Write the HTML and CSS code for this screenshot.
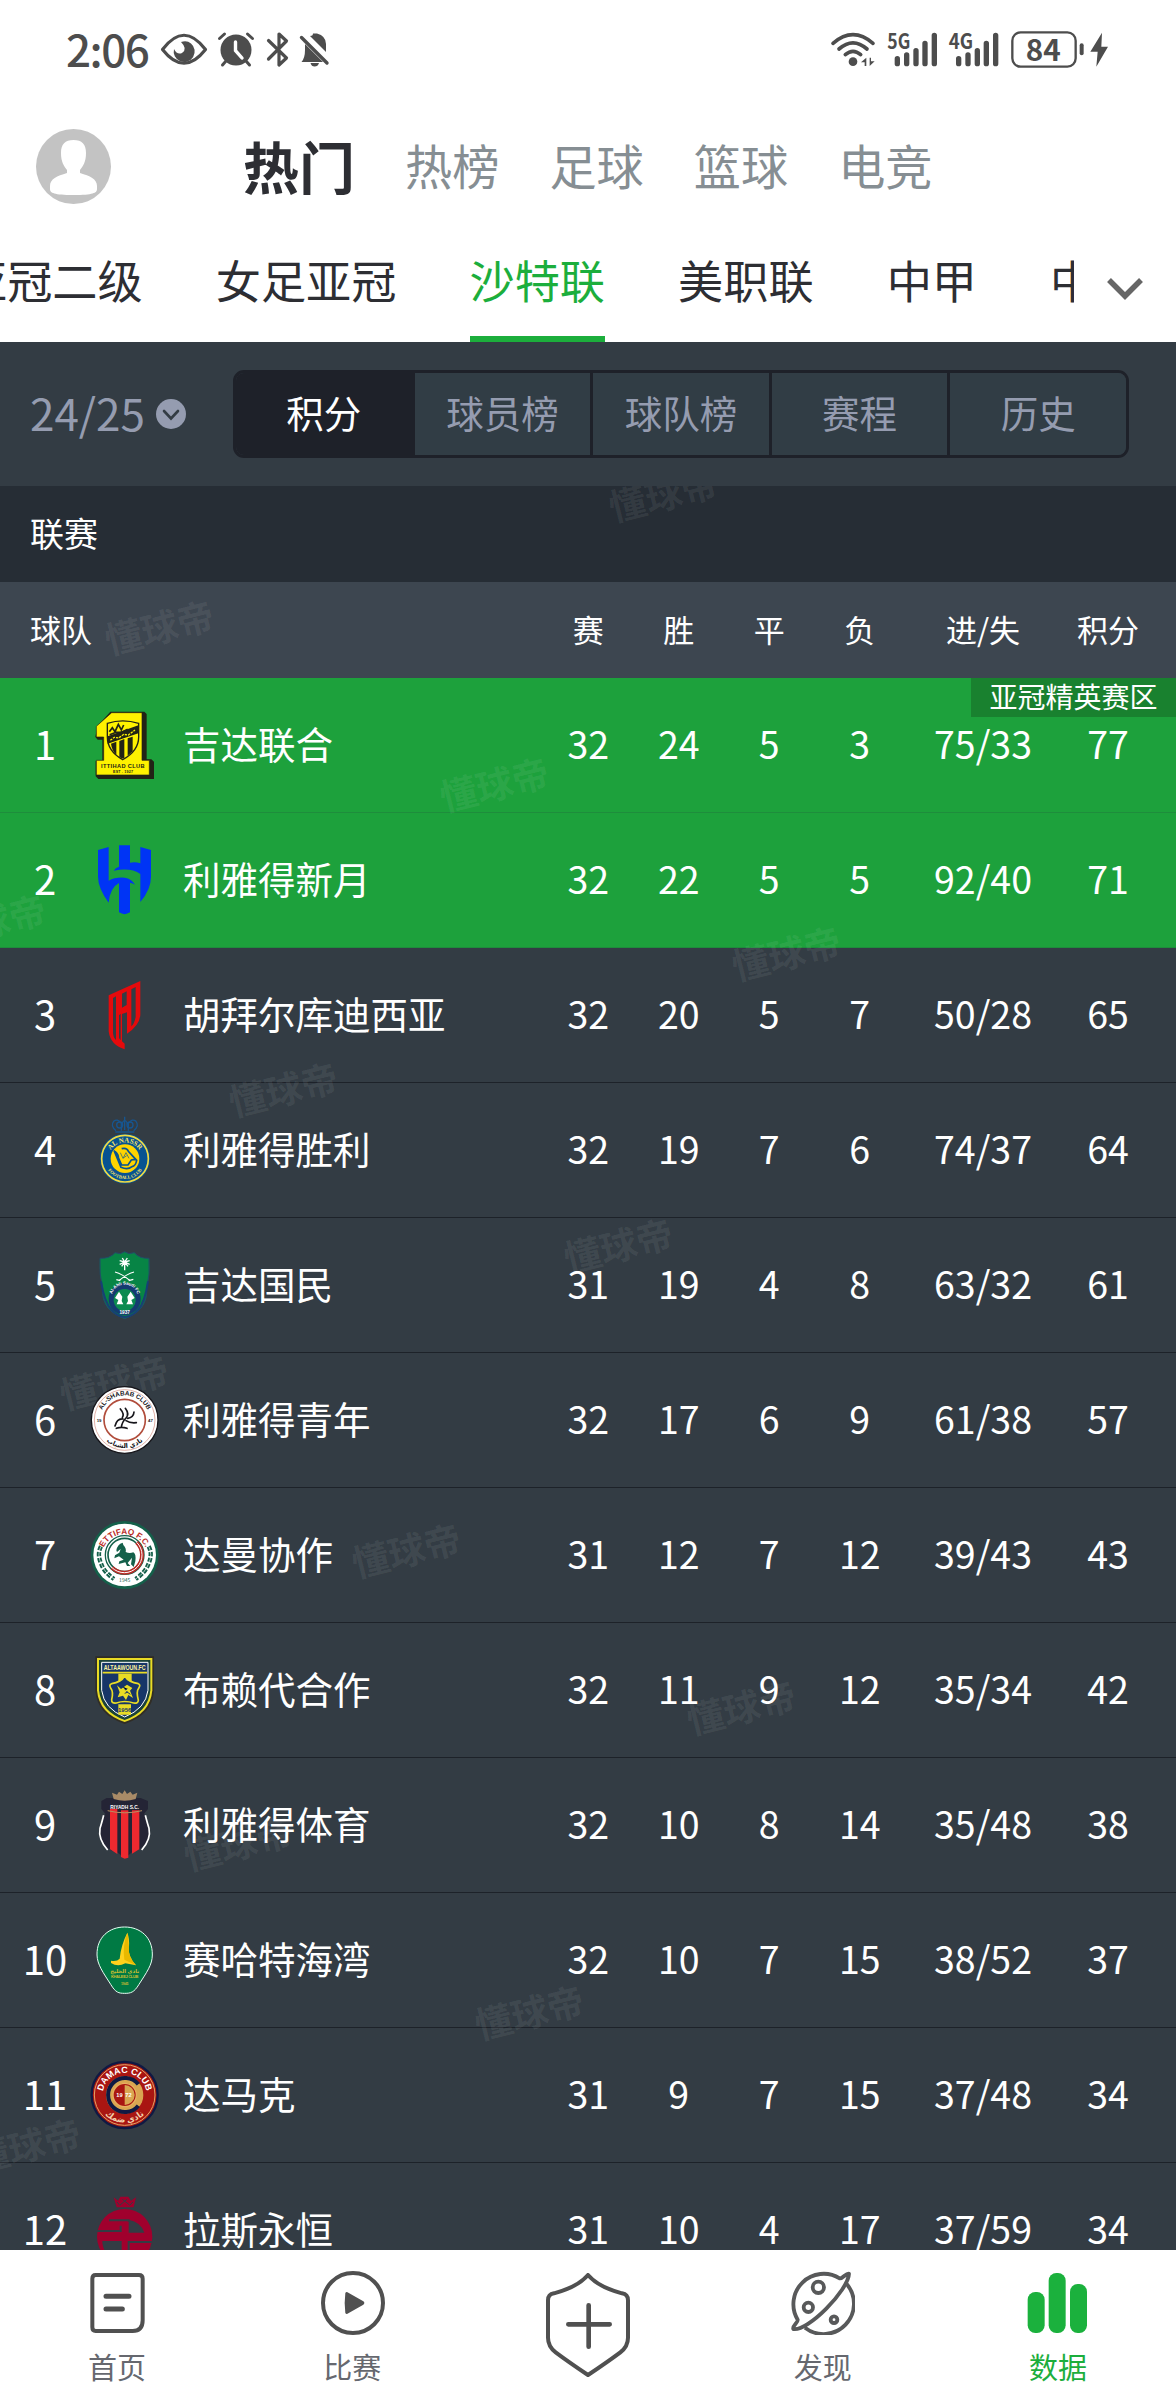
FILE: index.html
```html
<!DOCTYPE html>
<html lang="zh-CN">
<head>
  <meta charset="UTF-8">
  <title>沙特联 积分榜</title>
  <link rel="stylesheet" href="styles.css">
</head>
<body>

  <div class="status-bar">
    <div class="status-left">
      <span class="clock">2:06</span>
      <svg width="52" height="48" viewBox="158 26 52 48"><path d="M162.500 49.500Q184 21 205.500 49.500Q184 77 162.500 49.500Z" fill="none" stroke="#4d4d4d" stroke-width="3.200" stroke-linejoin="round"/><path d="M181 42Q187 40 191 43.500A10.500 10.500 0 1 1 174 49Q177 55 182 53Q188 49 181 42Z" fill="#4d4d4d"/></svg>
      <svg width="46" height="48" viewBox="214 26 46 48"><circle cx="237" cy="50" r="15.500" fill="#4d4d4d"/><path d="M220.500 38.500L225.500 34M253.500 38.500L248.500 34M227 61L223.500 65M247 61L250.500 65" stroke="#4d4d4d" stroke-width="3" stroke-linecap="round"/><path d="M236.500 42V50.500L243 58" fill="none" stroke="#fff" stroke-width="3.400" stroke-linecap="round"/></svg>
      <svg width="32" height="48" viewBox="262 26 32 48"><path d="M268.500 40.500L286.500 58L279 65V34L286.500 41L268.500 59" fill="none" stroke="#4d4d4d" stroke-width="3.200" stroke-linecap="round" stroke-linejoin="round"/></svg>
      <svg width="40" height="48" viewBox="296 26 40 48"><path d="M304 41L325 62H303.500Q307 58 307 50V44ZM312 36Q315 36 315 33.500H319Q328 36 328 44V52ZM312.500 63H321Q320 66.500 316.500 66.500Q313.500 66.500 312.500 63Z" fill="#4d4d4d"/><path d="M303.500 37.500L329 63" stroke="#4d4d4d" stroke-width="3.400" stroke-linecap="round"/></svg>
    </div>
    <div class="status-right">
      <!-- wifi -->
      <svg width="51.670" height="60" viewBox="30 0 155 180"><path d="M39 70Q99 18 159 70M57 87Q99 50 141 87M76 104Q99 84 122 104" fill="none" stroke="#4d4d4d" stroke-width="11" stroke-linecap="round"/><circle cx="99" cy="125" r="13" fill="#4d4d4d"/><path d="M123 127L139 113V138H134V127ZM164 124L149 138V113H153V124Z" fill="#4d4d4d"/></svg>
      <!-- signal 5G -->
      <svg width="61.670" height="60" viewBox="185 0 185 180"><text class="net" x="201" y="87" textLength="69" lengthAdjust="spacingAndGlyphs">5G</text><path d="M231 116V131M259 105V131M287 92V131M314 70V131M342 46V131" stroke="#4d4d4d" stroke-width="16" stroke-linecap="round"/></svg>
      <!-- signal 4G -->
      <svg width="61.670" height="60" viewBox="370 0 185 180"><text class="net" x="387" y="87" textLength="73" lengthAdjust="spacingAndGlyphs">4G</text><path d="M417 116V131M445 105V131M473 92V131M500 70V131M528 46V131" stroke="#4d4d4d" stroke-width="16" stroke-linecap="round"/></svg>
      <!-- battery -->
      <svg width="83.330" height="60" viewBox="555 0 250 180"><rect x="577" y="37" width="190" height="103" rx="25" fill="none" stroke="#4d4d4d" stroke-width="7"/><path d="M785 76V100" stroke="#4d4d4d" stroke-width="12" stroke-linecap="round"/><text class="level" x="617" y="122" textLength="105" lengthAdjust="spacingAndGlyphs">84</text></svg>
      <svg width="21.670" height="60" viewBox="805 0 65 180"><path d="M847 38L812 95H834L830 140L865 80H845Z" fill="#4d4d4d"/></svg>
    </div>
  </div>

  <div class="header">
    <svg class="avatar" width="75" height="75" viewBox="0 0 75 75"><circle cx="37.500" cy="37.500" r="37.500" fill="#c3c3c3"/><path d="M37.500 11C46 11 50 15 50 24C50 33 47 37 44 41V44C54 47 61 50 61 57V60C61 64 57 66 37.500 66S14 64 14 60V57C14 50 21 47 31 44V41C28 37 25 33 25 24C25 15 29 11 37.500 11Z" fill="#fff"/></svg>
    <div class="channels">
      <span class="channel current">热门</span>
      <span class="channel">热榜</span>
      <span class="channel">足球</span>
      <span class="channel">篮球</span>
      <span class="channel">电竞</span>
    </div>
  </div>

  <div class="league-bar">
    <div class="leagues">
      <span class="league">亚冠二级</span>
      <span class="league">女足亚冠</span>
      <span class="league active">沙特联</span>
      <span class="league">美职联</span>
      <span class="league">中甲</span>
      <span class="league">中乙</span>
    </div>
    <svg class="more" width="36" height="24" viewBox="0 0 36 24"><path d="M2 3L18 19L34 3" fill="none" stroke="#666" stroke-width="5.500"/></svg>
  </div>

  <div class="filter">
    <div class="season"><span>24/25</span>
      <svg width="30" height="30" viewBox="0 0 30 30"><circle cx="15" cy="15" r="15" fill="#959cb0"/><path d="M8 12L15 19.500L22 12" fill="none" stroke="#333c44" stroke-width="2.600" stroke-linecap="round"/></svg>
    </div>
    <div class="segments">
      <span class="segment on">积分</span>
      <span class="segment">球员榜</span>
      <span class="segment">球队榜</span>
      <span class="segment">赛程</span>
      <span class="segment">历史</span>
    </div>
  </div>

  <div class="standings">
    <div class="section"><span>联赛</span></div>
    <div class="row head">
      <span class="label">球队</span>
      <span>赛</span><span>胜</span><span>平</span><span>负</span><span>进/失</span><span>积分</span>
    </div>

    <div class="row zone">
      <span class="zone-tag">亚冠精英赛区</span>
      <span class="rank">1</span>
      <svg class="logo" viewBox="0 0 204 204">
        <path d="M20 44L58 2H160L167 9V145H181L189 152V204H22L14 196V150H34V86H20L13 78Z" fill="#222316"/>
        <path d="M16 46L62 5H153V148H175V192H16V148H38V78H16Z" fill="#fff200" stroke="#222316" stroke-width="2"/>
        <path d="M49 37Q95 22 143 37V78Q143 120 95 146Q49 120 49 78Z" fill="#fff200" stroke="#222316" stroke-width="4"/>
        <path d="M50 76L142 43V67L50 98ZM60 98L76 92V131Q63 120 60 98ZM85 90L100 84V142H92L85 138ZM110 82L125 77V121L110 134Z" fill="#222316"/>
        <path d="M55 62L64 50L72 62L82 40L91 57L98 42M56 71L75 64L93 64L110 55" fill="none" stroke="#222316" stroke-width="5"/>
        <path d="M58 88L70 79L83 81L98 70L112 72L132 57" fill="none" stroke="#fff200" stroke-width="4" stroke-dasharray="7 3"/>
        <text x="30" y="172" class="crest-bold" font-size="17" fill="#222316" textLength="131">ITTIHAD CLUB</text>
        <text x="66" y="185" class="crest-bold" font-size="11" fill="#222316" textLength="60">EST . 1927</text>
      </svg>
      <span class="team">吉达联合</span>
      <span>32</span><span>24</span><span>5</span><span>3</span><span>75/33</span><span>77</span>
    </div>

    <div class="row zone">
      <span class="rank">2</span>
      <svg class="logo" viewBox="0 0 204 204">
        <path d="M21 12L53 3V104Q72 93 101 95Q122 98 132 116Q123 110 117 111V199Q101 210 84 199V111Q57 125 53 170Q21 126 21 92ZM84 -2H117V50Q132 46 148 52V3L180 12V92Q180 130 148 168V84Q120 64 68 74Q73 65 84 62Z" fill="#0034f5"/>
      </svg>
      <span class="team">利雅得新月</span>
      <span>32</span><span>22</span><span>5</span><span>5</span><span>92/40</span><span>71</span>
    </div>

    <div class="row">
      <span class="rank">3</span>
      <svg class="logo" viewBox="0 0 204 204">
        <path d="M53 43L148 0V101Q146 133 108 158V94L93 99V181L101 188V205Q58 192 53 151Z" fill="#e50a0c"/>
        <path d="M66 51L75 46V177Q65 168 66 150ZM93 38L107 31V72L93 80ZM121 25L134 18V108Q130 129 121 136ZM84 171V103L89 98V178Z" fill="#333c44"/>
      </svg>
      <span class="team">胡拜尔库迪西亚</span>
      <span>32</span><span>20</span><span>5</span><span>7</span><span>50/28</span><span>65</span>
    </div>

    <div class="row">
      <span class="rank">4</span>
      <svg class="logo" viewBox="0 0 204 204">
        <g fill="none" stroke="#17558f" stroke-width="4"><path d="M73 48H130M75 44Q57 29 68 16Q79 6 91 22V44M128 44Q146 29 135 16Q124 6 112 22V44M91 30Q101 -4 112 30M101 2V42"/><circle cx="86" cy="27" r="9"/><circle cx="117" cy="27" r="9"/></g>
        <circle cx="102" cy="128" r="75" fill="#075391"/>
        <circle cx="102" cy="128" r="70" fill="none" stroke="#f0db45" stroke-width="5"/>
        <circle cx="102" cy="128" r="43" fill="#ffd400"/>
        <path d="M69 103L90 154Q110 163 123 152Q134 150 137 133L112 106Q108 94 92 98M72 106Q83 116 82 125L92 147H111L121 132L134 130" fill="none" stroke="#075391" stroke-width="5"/>
        <path d="M88 110L96 127L105 110L114 127M97 126L107 119" fill="none" stroke="#075391" stroke-width="2"/>
        <path id="nassrTop" d="M51 130A51 51 0 0 1 153 130" fill="none"/><path id="nassrBottom" d="M41 128A61 61 0 0 0 163 128" fill="none"/>
        <text class="crest-serif" font-size="21" fill="#f8e46a"><textPath href="#nassrTop" startOffset="50%" text-anchor="middle">AL NASSR</textPath></text>
        <text class="crest-serif" font-size="14" fill="#f8e46a"><textPath href="#nassrBottom" startOffset="50%" text-anchor="middle">FOOTBALL CLUB</textPath></text>
      </svg>
      <span class="team">利雅得胜利</span>
      <span>32</span><span>19</span><span>7</span><span>6</span><span>74/37</span><span>64</span>
    </div>

    <div class="row">
      <span class="rank">5</span>
      <svg class="logo" viewBox="0 0 204 204">
        <path d="M27 22Q57 23 72 5L88 8L101 2L114 8L130 5Q145 23 174 22Q178 70 167 112Q171 178 101 203Q30 178 35 112Q24 70 27 22Z" fill="#078445" stroke="#214d69" stroke-width="3"/>
        <path d="M30 91Q40 153 61 176Q78 196 101 198Q125 196 142 176Q162 153 171 91" fill="none" stroke="#173f75" stroke-width="6"/>
        <circle cx="101" cy="144" r="48" fill="#153b70"/><circle cx="101" cy="147" r="33" fill="#0b8b50"/>
        <path d="M101 30V58M101 33L86 29M101 33L116 29M101 33L86 40M101 33L116 40M101 33L94 21M101 33L109 21M101 33L92 46M101 33L111 46" stroke="#fff" stroke-width="4"/>
        <path d="M72 63Q94 69 117 89M129 63Q107 69 84 89M76 86L88 89M113 89L127 85" fill="none" stroke="#fff" stroke-width="3.500"/>
        <path d="M84 122L94 137L92 150L97 160H77L82 147L72 141ZM119 122L109 137L111 150L106 160H126L121 147L131 141Z" fill="#fff"/>
        <path id="ahliTop" d="M62 140A39 39 0 0 1 141 140" fill="none"/>
        <text class="crest-bold" font-size="13" fill="#fff"><textPath href="#ahliTop" startOffset="50%" text-anchor="middle">Al-Ahli Saudi FC</textPath></text>
        <text x="101" y="190" class="crest-bold" font-size="14" fill="#fff" text-anchor="middle">1937</text>
      </svg>
      <span class="team">吉达国民</span>
      <span>31</span><span>19</span><span>4</span><span>8</span><span>63/32</span><span>61</span>
    </div>

    <div class="row">
      <span class="rank">6</span>
      <svg class="logo" viewBox="0 0 204 204">
        <circle cx="101" cy="102" r="100" fill="#fff" stroke="#16151a" stroke-width="4"/>
        <circle cx="101" cy="102" r="91" fill="none" stroke="#d08a7c" stroke-width="2"/>
        <circle cx="101" cy="102" r="62" fill="none" stroke="#b14d3c" stroke-width="5"/>
        <g fill="none" stroke="#17161b" stroke-width="5" stroke-linecap="round"><path d="M88 69Q101 84 94 95M103 67Q116 84 105 96Q93 108 91 124M129 78Q128 94 110 97M72 120Q78 97 96 99M76 127Q92 121 108 127M105 104Q117 112 136 110"/></g>
        <path id="shababTop" d="M27 102A74 74 0 0 1 175 102" fill="none"/><path id="shababBottom" d="M17 102A84 84 0 0 0 185 102" fill="none"/>
        <text class="crest-bold" font-size="19" fill="#17161b"><textPath href="#shababTop" startOffset="50%" text-anchor="middle">AL-SHABAB CLUB</textPath></text>
        <text class="crest-bold" font-size="20" fill="#17161b"><textPath href="#shababBottom" startOffset="50%" text-anchor="middle">نادي الشباب</textPath></text>
        <text x="17" y="107" class="crest-bold" font-size="13" fill="#17161b">19</text><text x="171" y="107" class="crest-bold" font-size="13" fill="#17161b">47</text>
      </svg>
      <span class="team">利雅得青年</span>
      <span>32</span><span>17</span><span>6</span><span>9</span><span>61/38</span><span>57</span>
    </div>

    <div class="row">
      <span class="rank">7</span>
      <svg class="logo" viewBox="0 0 204 204">
        <circle cx="101" cy="102" r="102" fill="#14604a"/><circle cx="101" cy="102" r="94" fill="#fff"/>
        <circle cx="101" cy="102" r="58" fill="none" stroke="#14604a" stroke-width="4"/>
        <circle cx="101" cy="102" r="50" fill="none" stroke="#14604a" stroke-width="5"/>
        <path d="M137 64A53 53 0 0 1 63 140" fill="none" stroke="#b92c27" stroke-width="12"/>
        <path d="M137 64A53 53 0 0 1 63 140" fill="none" stroke="#fff" stroke-width="3"/>
        <path d="M76 88Q79 70 95 65L97 72Q107 83 104 93Q115 98 127 94Q136 99 133 121L128 138L120 130L123 110L110 126L118 135H108L103 124L83 129L85 121L98 116L84 106L70 112L72 103L85 95L89 84L78 93Z" fill="#14604a"/>
        <path d="M30 76Q17 99 31 130Q40 154 69 174M173 76Q186 99 172 130Q163 154 134 174" fill="none" stroke="#14604a" stroke-width="13" stroke-dasharray="13 5"/>
        <path d="M30 76Q17 99 31 130Q40 154 69 174M173 76Q186 99 172 130Q163 154 134 174" fill="none" stroke="#fff" stroke-width="2"/>
        <path id="ettifaqTop" d="M34 92A69 69 0 0 1 168 92" fill="none"/>
        <text class="crest-bold" font-size="25" fill="#b92c27"><textPath href="#ettifaqTop" startOffset="50%" text-anchor="middle">ETTIFAQ F.C.</textPath></text>
        <text x="101" y="184" font-size="15" fill="#14604a" text-anchor="middle">1945</text>
      </svg>
      <span class="team">达曼协作</span>
      <span>31</span><span>12</span><span>7</span><span>12</span><span>39/43</span><span>43</span>
    </div>

    <div class="row">
      <span class="rank">8</span>
      <svg class="logo" viewBox="0 0 204 204">
        <path d="M13 1H189V103Q185 177 101 204Q18 177 13 103Z" fill="#312d25"/>
        <path d="M18 6H184V103Q178 173 101 198Q24 173 18 103Z" fill="#e9dc25"/>
        <path d="M24 12H178V103Q172 168 101 192Q31 168 24 103Z" fill="#1a4139"/>
        <path d="M32 19H171V103Q164 158 101 183Q39 158 32 103Z" fill="#173668" stroke="#fff" stroke-width="3"/>
        <path d="M35 50H168" stroke="#e9dc25" stroke-width="5"/>
        <path d="M82 53H122V84H82ZM82 145H120V176H82Z" fill="#e9dc25"/>
        <path d="M101 60Q113 79 142 83Q150 86 143 97Q135 107 142 133Q141 143 128 141Q101 132 76 141Q61 143 62 131Q68 108 59 96Q53 86 62 83Q90 79 101 60Z" fill="#173668" stroke="#e9dc25" stroke-width="5" stroke-linejoin="round"/>
        <path d="M78 88L90 99L108 86L124 96L117 104L126 126L112 117L105 132L96 119L80 124L86 109Z" fill="#e9dc25"/>
        <path d="M96 92L104 102L109 98M101 112L111 108M106 106L118 115" stroke="#173668" stroke-width="3"/>
        <text x="38" y="43" class="crest-bold" font-size="21" fill="#fff4a0" textLength="126" lengthAdjust="spacingAndGlyphs">ALTAAWOUN.FC</text>
        <text x="101" y="168" class="crest-bold" font-size="18" fill="#173668" text-anchor="middle">1956</text>
      </svg>
      <span class="team">布赖代合作</span>
      <span>32</span><span>11</span><span>9</span><span>12</span><span>35/34</span><span>42</span>
    </div>

    <div class="row">
      <span class="rank">9</span>
      <svg class="logo" viewBox="0 0 204 204">
        <path d="M47 21L149 21L171 30V54L159 68Q184 118 167 151Q150 180 123 184L101 202L79 184Q49 180 34 151Q19 118 43 68L31 54V30Z" fill="#242435"/>
        <path d="M57 53H79V189L57 175ZM90 58H112V200L101 203L90 198ZM123 58H145V175L123 188Z" fill="#ee292f"/>
        <path d="M38 73Q31 100 27 112Q21 144 50 177M163 73Q170 100 174 112Q181 144 152 177" fill="none" stroke="#fff" stroke-width="5"/>
        <path d="M50 59Q101 72 153 59" fill="none" stroke="#b59162" stroke-width="3"/>
        <path d="M68 24L63 5L78 11L84 2L94 9L101 -2L108 9L118 2L125 11L139 5L134 24Q101 34 68 24Z" fill="#a98b67"/>
        <text x="101" y="54" class="crest-bold" font-size="18" fill="#fff" text-anchor="middle" textLength="86" lengthAdjust="spacingAndGlyphs">RIYADH S.C.</text>
      </svg>
      <span class="team">利雅得体育</span>
      <span>32</span><span>10</span><span>8</span><span>14</span><span>35/48</span><span>38</span>
    </div>

    <div class="row">
      <span class="rank">10</span>
      <svg class="logo" viewBox="0 0 204 204">
        <path d="M101 3C147 3 185 33 184 87C184 116 167 139 144 175C129 200 119 202 101 202S74 200 59 175C36 139 19 116 18 87C17 33 55 3 101 3Z" fill="#007a44" stroke="#e6fff4" stroke-width="3"/>
        <path d="M109 20Q90 57 86 98Q78 107 60 104V111Q80 124 103 112L135 118Q110 91 114 64Q116 38 109 20Z" fill="#ffd11c"/><path d="M109 20Q94 59 100 101L135 118Q110 91 114 64Z" fill="#e8b900"/>
        <g class="crest-bold" fill="#c9bd32" text-anchor="middle"><text x="101" y="142" font-size="16">نادي الخليج</text><text x="101" y="157" font-size="12" textLength="82">KHALEEJ CLUB</text><text x="101" y="177" font-size="10">1945</text></g>
      </svg>
      <span class="team">赛哈特海湾</span>
      <span>32</span><span>10</span><span>7</span><span>15</span><span>38/52</span><span>37</span>
    </div>

    <div class="row">
      <span class="rank">11</span>
      <svg class="logo" viewBox="0 0 204 204">
        <circle cx="101" cy="102" r="99" fill="#a91612" stroke="#101943" stroke-width="7"/>
        <circle cx="101" cy="102" r="91" fill="none" stroke="#e2a565" stroke-width="3"/>
        <circle cx="101" cy="102" r="56" fill="#d9a651"/>
        <path d="M142 70A51 51 0 1 0 142 134" fill="none" stroke="#101943" stroke-width="12"/>
        <circle cx="101" cy="102" r="35" fill="#a91612" stroke="#e9ae60" stroke-width="4"/>
        <path d="M101 72A30 30 0 0 1 101 132Z" fill="#d9a651"/>
        <text x="76" y="109" class="crest-bold" font-size="17" fill="#fff">19</text><text x="103" y="109" class="crest-bold" font-size="17" fill="#fff">72</text>
        <path id="damacTop" d="M35 102A66 66 0 0 1 167 102" fill="none"/><path id="damacBottom" d="M18 102A83 83 0 0 0 184 102" fill="none"/>
        <text class="crest-bold" font-size="27" fill="#fff"><textPath href="#damacTop" startOffset="50%" text-anchor="middle" textLength="184" lengthAdjust="spacingAndGlyphs">DAMAC CLUB</textPath></text>
        <text class="crest-bold" font-size="26" fill="#f4cfaa"><textPath href="#damacBottom" startOffset="50%" text-anchor="middle">نادي ضمك</textPath></text>
      </svg>
      <span class="team">达马克</span>
      <span>31</span><span>9</span><span>7</span><span>15</span><span>37/48</span><span>34</span>
    </div>

    <div class="row">
      <span class="rank">12</span>
      <svg class="logo" viewBox="0 0 204 204">
        <path d="M68 4L81 14L88 2H112L120 14L135 4L128 34H77Z" fill="#a0002d"/><path d="M87 27L108 10M94 10L116 27M78 18L86 28M126 18L116 28" stroke="#333c44" stroke-width="3"/>
        <circle cx="101" cy="122" r="83" fill="#a0002d"/>
        <path d="M113 71Q150 78 160 110H113Z" fill="#333c44"/>
        <path d="M54 73H113V77M18 105H89V89M34 138H89V190M184 138H113V190" fill="none" stroke="#333c44" stroke-width="6"/>
        <path d="M34 141H89V190H60Q38 169 34 141Z" fill="#333c44"/>
      </svg>
      <span class="team">拉斯永恒</span>
      <span>31</span><span>10</span><span>4</span><span>17</span><span>37/59</span><span>34</span>
    </div>

    <div class="watermarks">
      <i style="left:663px;top:10px">懂球帝</i>
      <i style="left:159px;top:143px">懂球帝</i>
      <i style="left:494px;top:300px">懂球帝</i>
      <i style="left:-9px;top:437px">懂球帝</i>
      <i style="left:786px;top:469px">懂球帝</i>
      <i style="left:283px;top:605px">懂球帝</i>
      <i style="left:618px;top:761px">懂球帝</i>
      <i style="left:114px;top:898px">懂球帝</i>
      <i style="left:406px;top:1066px">懂球帝</i>
      <i style="left:741px;top:1223px">懂球帝</i>
      <i style="left:238px;top:1359px">懂球帝</i>
      <i style="left:529px;top:1528px">懂球帝</i>
      <i style="left:26px;top:1661px">懂球帝</i>
    </div>
  </div>

  <div class="tab-bar">
    <div class="tab">
      <svg width="64" height="64" viewBox="0 0 192 192"><path d="M29 12H159Q170 12 170 23V148Q170 180 140 180H29Q19 180 19 169V23Q19 12 29 12Z" fill="none" stroke="#505050" stroke-width="12"/><path d="M60 76H129M60 114H109" stroke="#505050" stroke-width="15" stroke-linecap="round"/></svg>
      <span>首页</span>
    </div>
    <div class="tab">
      <svg width="64" height="64" viewBox="0 0 192 192"><circle cx="96" cy="96" r="90" fill="none" stroke="#505050" stroke-width="12"/><path d="M73 66Q76 61 82 65L127 91Q133 96 127 101L82 127Q76 131 73 126Q69 96 73 66Z" fill="#505050"/></svg>
      <span>比赛</span>
    </div>
    <div class="tab">
      <svg width="84" height="104" viewBox="48 54 252 312"><path d="M174 60Q205 96 276 115Q294 118 294 136V248Q294 274 271 292Q235 319 174 360Q113 319 77 292Q54 274 54 248V136Q54 118 72 115Q143 96 174 60Z" fill="none" stroke="#505050" stroke-width="12" stroke-linejoin="round"/><path d="M115 208H239M176 151V275" stroke="#505050" stroke-width="14" stroke-linecap="round"/></svg>
    </div>
    <div class="tab">
      <svg width="64" height="64" viewBox="0 0 192 192"><g fill="none" stroke="#58595a" stroke-width="11.500" stroke-linejoin="round"><path d="M146 22A91 91 0 0 0 20 146C22 154 3 164 7 174C50 182 172 58 174 8C166 4 156 24 146 22ZM167 39A91 91 0 0 1 42 170"/><circle cx="82" cy="49" r="17"/><circle cx="52" cy="109" r="14"/><circle cx="129" cy="146" r="10"/></g></svg>
      <span>发现</span>
    </div>
    <div class="tab selected">
      <svg width="64" height="64" viewBox="0 0 192 192"><g fill="#1bb13d"><rect x="5" y="63" width="51" height="123" rx="23"/><rect x="68" y="6" width="51" height="180" rx="23"/><rect x="132" y="39" width="51" height="147" rx="23"/></g></svg>
      <span>数据</span>
    </div>
  </div>

</body>
</html>
```

FILE: styles.css
```css
* {
  box-sizing: border-box;
}
body {
  margin: 0;
  width: 1176px;
  height: 2400px;
  overflow: hidden;
  display: flex;
  flex-direction: column;
  background: #fff;
  font-family: 'Noto Sans CJK SC', 'Noto Sans', sans-serif;
  color: #fff;
}
svg {
  display: block;
  flex-shrink: 0;
}
.status-bar {
  height: 100px;
  padding: 20px 66px 0;
  display: flex;
  justify-content: space-between;
  color: #4d4d4d;
}
.status-left,
.status-right {
  display: flex;
  align-items: center;
  height: 60px;
}
.clock {
  width: 92px;
  font-size: 44px;
  font-weight: 500;
  line-height: 60px;
  letter-spacing: -1.5px;
  padding-bottom: 5px;
}
.status-left svg + svg {
  margin-left: 3px;
}
.status-left svg:last-child {
  margin-left: 0;
}
.net {
  font: 700 62px 'Noto Sans CJK SC', sans-serif;
  fill: #4d4d4d;
}
.level {
  font: 700 89px 'Noto Sans CJK SC', sans-serif;
  fill: #4d4d4d;
}
.header {
  height: 133px;
  padding: 0 36px;
  display: flex;
  align-items: center;
}
.channels {
  display: flex;
  align-items: center;
  gap: 50px;
  margin-left: 132px;
  height: 70px;
  padding-bottom: 4px;
}
.channel {
  font-size: 47.200px;
  line-height: 60px;
  color: #868e93;
}
.channel.current {
  font-size: 56px;
  font-weight: 700;
  color: #2d2e33;
}
.league-bar {
  height: 109px;
  display: flex;
}
.leagues {
  width: 1074px;
  display: flex;
  gap: 73px;
  overflow: hidden;
}
.league {
  flex-shrink: 0;
  height: 109px;
  font-size: 45.200px;
  line-height: 94px;
  color: #2d2e33;
}
.league:first-child {
  margin-left: -38px;
}
.league.active {
  color: #1cae3c;
  border-bottom: 6px solid #1cae3c;
}
.more {
  margin: 44px 0 0 33px;
}
.filter {
  height: 144px;
  padding: 28px 47px 0 30px;
  display: flex;
  background: #333c44;
}
.season {
  width: 203px;
  height: 87px;
  display: flex;
  align-items: center;
  font-size: 44px;
  line-height: 80px;
  color: #959cb0;
}
.season span {
  width: 126px;
  margin-bottom: 3px;
}
.segments {
  width: 896px;
  height: 88px;
  display: flex;
  border: 3px solid #1e2129;
  border-radius: 11px;
  overflow: hidden;
}
.segment {
  flex: 1;
  text-align: center;
  font-size: 37.500px;
  line-height: 78px;
  color: #959cb0;
  background: #313d45;
}
.segment + .segment {
  border-left: 3px solid #1e2129;
}
.segment.on {
  color: #fff;
  background: #1e2129;
}
.standings {
  position: relative;
  height: 1764px;
  overflow: hidden;
  background: #333c44;
}
.section {
  height: 96px;
  padding-left: 30px;
  background: #262d35;
  font-size: 34px;
  line-height: 94px;
}
.row {
  height: 135px;
  display: grid;
  grid-template-columns: 90px 69px 384px repeat(4, 90.500px) 156px 94px;
  align-items: center;
  border-bottom: 1px solid #1d2229;
  font-size: 37.500px;
  text-align: center;
}
.row > span,
.row > svg,
.section span {
  position: relative;
  z-index: 2;
}
.row > span {
  line-height: 60px;
  margin-bottom: 4px;
}
.row.head {
  height: 96px;
  border: 0;
  background: #3d4650;
  font-size: 31px;
}
.row.head > span {
  margin-bottom: 3px;
}
.label {
  grid-column: span 3;
  padding-left: 30px;
  text-align: left;
}
.row.zone {
  position: relative;
  background: #1da13c;
  border-color: #1e8d3c;
}
.row > .zone-tag {
  position: absolute;
  top: 0;
  right: 0;
  width: 205px;
  height: 39px;
  background: #19812f;
  font-size: 28px;
  line-height: 37px;
}
.row > .rank {
  font-size: 40px;
}
.logo {
  width: 68px;
  height: 68px;
  margin-left: 1px;
  overflow: visible;
}
.row > .team {
  padding-left: 24px;
  text-align: left;
}
.crest-bold {
  font-family: 'Liberation Sans', 'DejaVu Sans', sans-serif;
  font-weight: 700;
}
.crest-serif {
  font-family: 'Liberation Serif', serif;
  font-weight: 700;
}
.watermarks {
  position: absolute;
  inset: 0;
  z-index: 1;
}
.watermarks i {
  position: absolute;
  width: 120px;
  margin: -31px 0 0 -60px;
  font-size: 37px;
  font-style: normal;
  font-weight: 700;
  line-height: 56px;
  text-align: center;
  color: rgba(255, 255, 255, 0.07);
  transform: rotate(-14deg);
}
.tab-bar {
  height: 150px;
  display: flex;
  background: #fff;
}
.tab {
  flex: 1;
  display: flex;
  flex-direction: column;
  align-items: center;
  padding-top: 21px;
  font-size: 29px;
  color: #66686f;
}
.tab span {
  line-height: 40px;
  margin: 11px 1px 0 0;
}
.tab:nth-child(3) {
  padding-top: 23px;
}
.tab.selected {
  color: #1cae3c;
}
```
